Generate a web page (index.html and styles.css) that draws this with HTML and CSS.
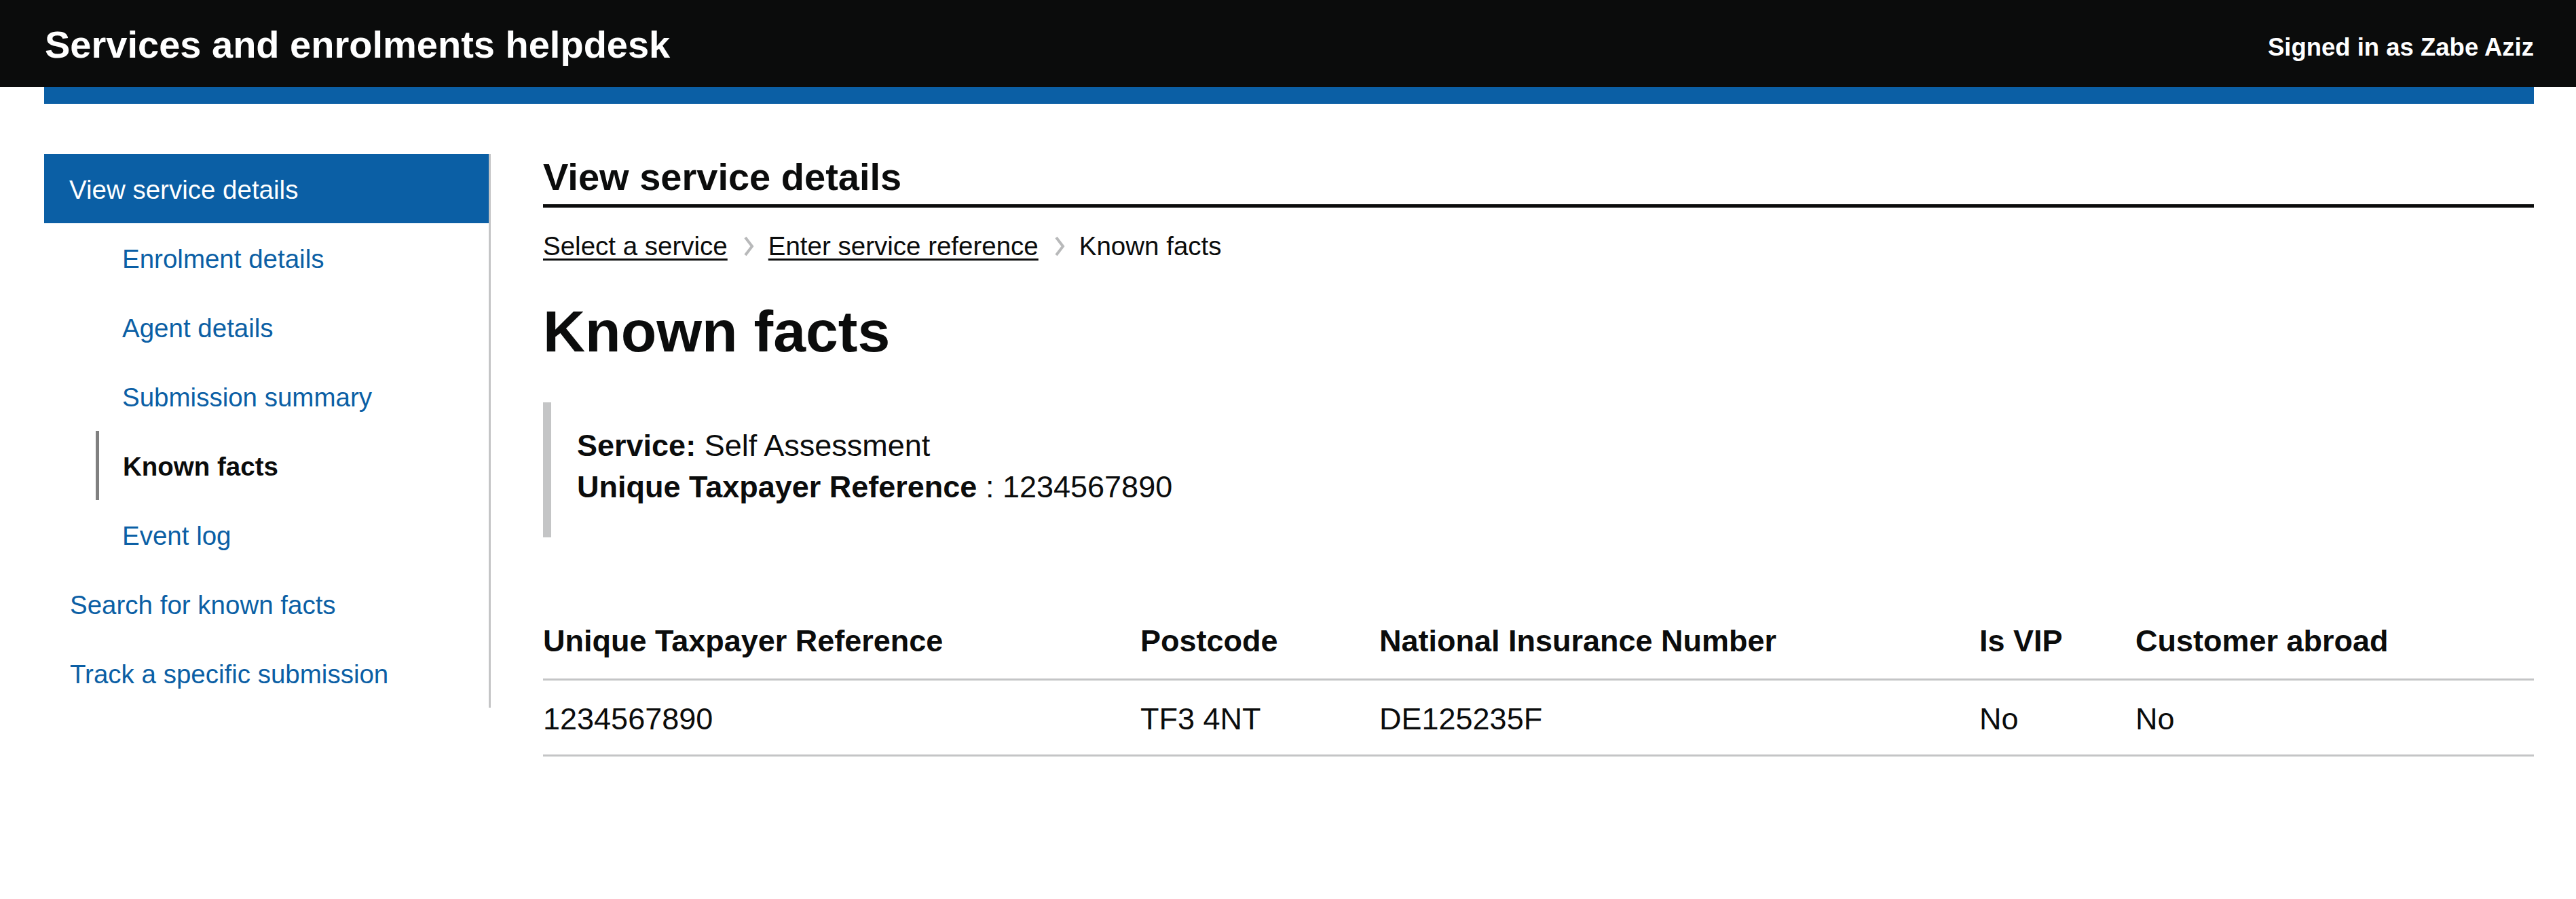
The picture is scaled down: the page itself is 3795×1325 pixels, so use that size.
FILE: index.html
```html
<!DOCTYPE html>
<html lang="en">
<head>
<meta charset="utf-8">
<title>Known facts - Services and enrolments helpdesk</title>
<link rel="stylesheet" href="styles.css">
</head>
<body>
<header class="top">
  <div class="top-title">Services and enrolments helpdesk</div>
  <div class="top-user">Signed in as Zabe Aziz</div>
</header>
<div class="top-bar"></div>
<div class="page">
  <nav class="side">
    <a class="side-item side-current" href="#">View service details</a>
    <a class="side-item side-sub" href="#">Enrolment details</a>
    <a class="side-item side-sub" href="#">Agent details</a>
    <a class="side-item side-sub" href="#">Submission summary</a>
    <div class="side-item side-active"><span>Known facts</span></div>
    <a class="side-item side-sub" href="#">Event log</a>
    <a class="side-item side-top" href="#">Search for known facts</a>
    <a class="side-item side-top" href="#">Track a specific submission</a>
  </nav>
  <main class="content">
    <h2 class="section-title">View service details</h2>
    <div class="crumbs">
      <a class="crumb-link" href="#">Select a service</a>
      <svg class="chev" viewBox="0 0 16 30" width="16" height="30"><path d="M3 2 L13 15 L3 28" fill="none" stroke="#b8b9ba" stroke-width="4"/></svg>
      <a class="crumb-link" href="#">Enter service reference</a>
      <svg class="chev" viewBox="0 0 16 30" width="16" height="30"><path d="M3 2 L13 15 L3 28" fill="none" stroke="#b8b9ba" stroke-width="4"/></svg>
      <span class="crumb-current">Known facts</span>
    </div>
    <h1 class="page-title">Known facts</h1>
    <div class="inset">
      <div><strong>Service:</strong> Self Assessment</div>
      <div><strong>Unique Taxpayer Reference</strong> : 1234567890</div>
    </div>
    <table class="facts">
      <thead>
        <tr>
          <th class="c1">Unique Taxpayer Reference</th>
          <th class="c2">Postcode</th>
          <th class="c3">National Insurance Number</th>
          <th class="c4">Is VIP</th>
          <th class="c5">Customer abroad</th>
        </tr>
      </thead>
      <tbody>
        <tr>
          <td>1234567890</td>
          <td>TF3 4NT</td>
          <td>DE125235F</td>
          <td>No</td>
          <td>No</td>
        </tr>
      </tbody>
    </table>
  </main>
</div>
</body>
</html>
```
FILE: styles.css
```css
* { box-sizing: border-box; }
html, body { margin: 0; padding: 0; background: #ffffff; }
body {
  font-family: "Liberation Sans", Arial, sans-serif;
  color: #0b0c0c;
}
.top {
  background: #0b0c0c;
  height: 128px;
  display: flex;
  align-items: center;
  justify-content: space-between;
  padding: 0 62px 0 66px;
  color: #ffffff;
  font-weight: 700;
}
.top-title {
  font-size: 56px;
  line-height: 60px;
  padding-top: 4px;
}
.top-user {
  font-size: 36.5px;
  line-height: 44px;
  padding-top: 12px;
}
.top-bar {
  height: 25px;
  margin: 0 62px 0 65px;
  background: #0b5fa5;
}
.page {
  display: flex;
  align-items: flex-start;
  padding: 74px 62px 0 65px;
}
.side {
  width: 658px;
  flex: none;
  border-right: 3px solid #c4c5c6;
  display: flex;
  flex-direction: column;
}
.side-item {
  display: block;
  height: 102px;
  padding-top: 29px;
  font-size: 38.5px;
  line-height: 48px;
  color: #0b5fa5;
  text-decoration: none;
  white-space: nowrap;
}
.side-current {
  background: #0b5fa5;
  color: #ffffff;
  padding-left: 37px;
}
.side-top { padding-left: 38px; }
.side-sub { padding-left: 115px; }
.side-active {
  margin-left: 76px;
  border-left: 5px solid #808080;
  padding-left: 35px;
  color: #0b0c0c;
  font-weight: 700;
}
.content {
  flex: 1;
  margin-left: 77px;
  margin-top: -2px;
}
.section-title {
  margin: 0;
  font-size: 56px;
  line-height: 72px;
  font-weight: 700;
  padding-bottom: 4px;
  border-bottom: 5px solid #0b0c0c;
}
.crumbs {
  margin-top: 33px;
  display: flex;
  align-items: center;
  font-size: 38.5px;
  line-height: 48px;
}
.crumb-link {
  color: #0b0c0c;
  text-decoration: underline;
  text-decoration-thickness: 3px;
  text-underline-offset: 5px;
}
.crumb-current { color: #0b0c0c; }
.chev {
  display: block;
  margin: 0 21px 0 23px;
}
.page-title {
  margin: 53px 0 0 0;
  font-size: 86px;
  line-height: 97px;
  font-weight: 700;
}
.inset {
  margin-top: 56px;
  border-left: 12px solid #c4c5c6;
  padding: 34px 0 44px 38px;
  font-size: 45px;
  line-height: 60.5px;
}
.inset strong { font-weight: 700; }
.facts {
  margin-top: 99px;
  width: 100%;
  border-collapse: collapse;
  table-layout: fixed;
  font-size: 45px;
  line-height: 60.5px;
}
.facts th, .facts td {
  text-align: left;
  padding: 24px 20px 24px 0;
  border-bottom: 3px solid #c4c5c6;
  vertical-align: top;
  white-space: nowrap;
}
.facts th { font-weight: 700; }
.facts td { padding-top: 27px; padding-bottom: 22px; }
.c1 { width: 880px; }
.c2 { width: 352px; }
.c3 { width: 884px; }
.c4 { width: 230px; }
.c5 { width: auto; }
```
